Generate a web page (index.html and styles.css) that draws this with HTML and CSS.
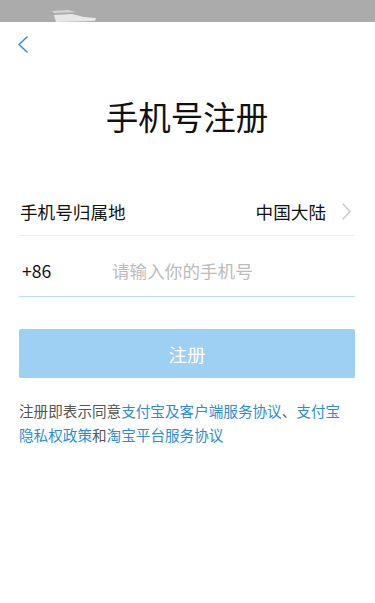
FILE: index.html
```html
<!DOCTYPE html>
<html lang="zh-CN">
<head>
    <meta charset="UTF-8">
    <meta name="viewport" content="width=device-width, initial-scale=1.0">
    <title>手机号注册</title>
    <link rel="stylesheet" href="styles.css">
</head>
<body>
    <!-- Status bar (blurred) -->
    <div class="status-bar">
        <svg class="status-smudge" width="48" height="14" viewBox="0 0 48 14">
            <path d="M2 2 L18 1 L26 3 L4 4 Z" fill="#e6e6e6" opacity="0.7"/>
            <path d="M4 6 L22 5 L34 8 L46 9 L45 12 L6 13 Z" fill="#f6f6f6" opacity="0.8"/>
        </svg>
    </div>

    <!-- Header -->
    <div class="header">
        <svg class="back-icon" width="12" height="18" viewBox="0 0 12 18">
            <polyline points="10,1 2,8.5 10,16" fill="none" stroke="#3a8fca" stroke-width="1.6" stroke-linecap="round" stroke-linejoin="round"/>
        </svg>
    </div>

    <div class="register-page">
        <h1 class="page-title">手机号注册</h1>

        <div class="form-row region-row">
            <span class="row-label">手机号归属地</span>
            <span class="row-value">
                中国大陆
                <svg class="arrow-icon" width="10" height="17" viewBox="0 0 10 17">
                    <polyline points="2,1 9,8.5 2,16" fill="none" stroke="#c9c9c9" stroke-width="1.4" stroke-linecap="round" stroke-linejoin="round"/>
                </svg>
            </span>
        </div>

        <div class="form-row phone-row">
            <span class="phone-code">+86</span>
            <input type="tel" class="phone-input" placeholder="请输入你的手机号">
        </div>

        <button class="submit-btn" disabled>注册</button>

        <p class="agreement">
            <span class="agree-line">注册即表示同意<a href="#">支付宝及客户端服务协议</a>、<a href="#">支付宝</a></span>
            <span class="agree-line"><a href="#">隐私权政策</a>和<a href="#">淘宝平台服务协议</a></span>
        </p>
    </div>
</body>
</html>
```

FILE: styles.css
```css
body {
    margin: 0;
    padding: 0;
    background-color: #fff;
    font-family: "Noto Sans CJK SC", "Noto Sans", sans-serif;
    color: #111;
}

.status-bar {
    height: 22px;
    background-color: #ababab;
    display: flex;
    align-items: flex-end;
    padding-left: 50px;
}

.status-smudge {
    display: block;
    margin-bottom: -1px;
}

.header {
    height: 44px;
    display: flex;
    align-items: center;
    padding-left: 17px;
}

.back-icon {
    display: block;
    margin-top: 2px;
}

.register-page {
    padding: 0 20px 0 19px;
}

.page-title {
    margin: 30px 0 0;
    font-size: 32.5px;
    line-height: 40px;
    font-weight: normal;
    text-align: center;
    color: #111;
}

.form-row {
    display: flex;
    align-items: center;
}

.region-row {
    margin-top: 52px;
    height: 47px;
    border-bottom: 1px solid #efefef;
    justify-content: space-between;
    font-size: 17.6px;
    padding-left: 1px;
}

.row-value {
    display: flex;
    align-items: center;
}

.arrow-icon {
    display: block;
    margin-left: 15px;
    margin-right: 4px;
}

.phone-row {
    padding: 23px 0 13px 3px;
    border-bottom: 1px solid #b4e2ee;
    font-size: 17.6px;
    line-height: 24px;
}

.phone-code {
    width: 90px;
}

.phone-input {
    flex: 1;
    border: none;
    outline: none;
    padding: 0;
    font-family: inherit;
    font-size: 17.6px;
    line-height: 24px;
    color: #111;
    background: transparent;
}

.phone-input::placeholder {
    color: #bcbcbc;
}

.submit-btn {
    display: block;
    width: 100%;
    height: 49px;
    margin-top: 32px;
    border: none;
    border-radius: 2px;
    background-color: #9dd0f3;
    color: #fff;
    font-family: inherit;
    font-size: 18.5px;
}

.agreement {
    margin: 21px 0 0;
    font-size: 14.6px;
    line-height: 24px;
    color: #555;
}

.agree-line {
    display: block;
    white-space: nowrap;
}

.agreement a {
    color: #2b8dd3;
    text-decoration: none;
}
```
